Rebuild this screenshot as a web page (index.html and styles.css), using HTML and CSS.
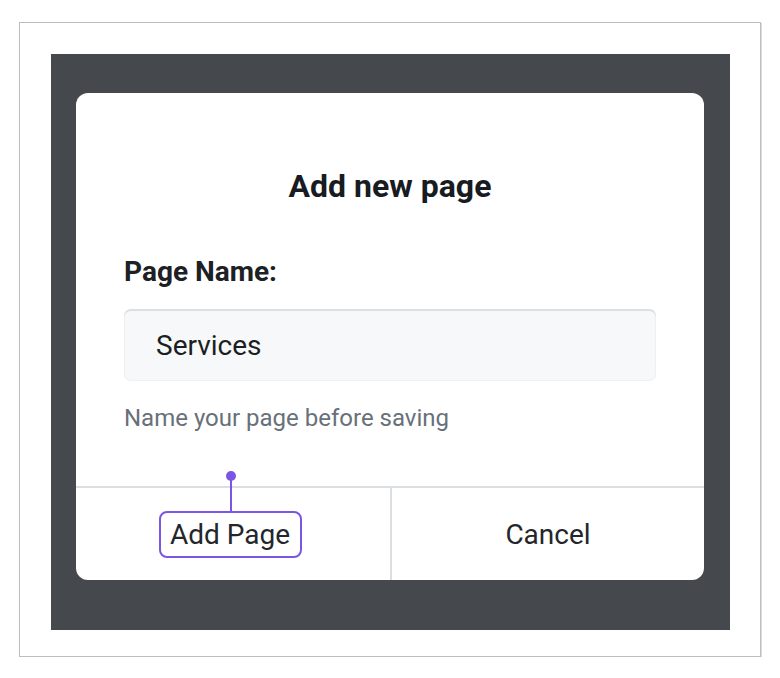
FILE: index.html
```html
<!DOCTYPE html>
<html>
<head>
<meta charset="utf-8">
<link rel="stylesheet" href="styles.css">
</head>
<body>
<div class="frame">
  <div class="backdrop">
    <div class="card">
      <div class="card-body">
        <h1 class="title">Add new page</h1>
        <label class="label">Page Name:</label>
        <div class="input">Services</div>
        <p class="helper">Name your page before saving</p>
      </div>
      <div class="footer">
        <div class="cell">
          <div class="btn-primary">
            <span class="marker"><span class="marker-dot"></span></span>
            Add Page
          </div>
        </div>
        <div class="cell cell-right">
          <div class="btn-text">Cancel</div>
        </div>
      </div>
    </div>
  </div>
</div>
</body>
</html>
```

FILE: styles.css
```css
* { box-sizing: border-box; }
html, body { margin: 0; padding: 0; background: #ffffff; }
body { font-family: Roboto, "Noto Sans", sans-serif; color: #1b1e22; }

.frame {
  margin: 22px 0 0 19px;
  width: 742px;
  height: 635px;
  border: 1px solid #bdbdbd;
  box-shadow: 1px 1px 0 #dcdcdc;
  padding: 31px 0 0 31px;
}

.backdrop {
  width: 679px;
  height: 576px;
  background: #45494d;
  padding: 39px 0 0 25px;
}

.card {
  width: 628px;
  height: 487px;
  background: #ffffff;
  border-radius: 12px;
  display: flex;
  flex-direction: column;
  overflow: hidden;
}

.card-body {
  padding: 74px 48px 0 48px;
  height: 393px;
  display: flex;
  flex-direction: column;
}

.title {
  margin: 0;
  font-size: 32px;
  line-height: 38px;
  font-weight: 700;
  text-align: center;
  color: #181b1f;
}

.label {
  margin-top: 51px;
  font-size: 28px;
  line-height: 32px;
  font-weight: 700;
  color: #1d2024;
}

.input {
  margin-top: 21px;
  height: 72px;
  flex: none;
  background: #f7f8fa;
  border-radius: 7px;
  box-shadow: inset 0 2px 0 #dcdfe3, inset 0 0 0 1px #eef0f2;
  padding: 0 32px;
  display: flex;
  align-items: center;
  font-size: 28px;
  color: #1b1e22;
}

.helper {
  margin: 23px 0 0 0;
  font-size: 24px;
  line-height: 28px;
  color: #68707a;
}

.footer {
  flex: 1;
  border-top: 2px solid #dcdfe2;
  display: flex;
}

.cell {
  width: 314px;
  display: flex;
  align-items: center;
  justify-content: center;
}

.cell-right {
  flex: 1;
  border-left: 2px solid #dcdfe2;
}

.btn-primary {
  position: relative;
  margin-left: -6px;
  width: 143px;
  height: 47px;
  border: 2px solid #7a55e6;
  border-radius: 8px;
  display: flex;
  align-items: center;
  justify-content: center;
  font-size: 28px;
  color: #23272c;
}

.marker {
  position: absolute;
  left: 69px;
  top: -38px;
  width: 2px;
  height: 36px;
  background: #7a55e6;
}

.marker-dot {
  position: absolute;
  left: -4px;
  top: -4px;
  width: 10px;
  height: 10px;
  border-radius: 50%;
  background: #7a55e6;
}

.btn-text {
  font-size: 28px;
  color: #23272c;
}
```
